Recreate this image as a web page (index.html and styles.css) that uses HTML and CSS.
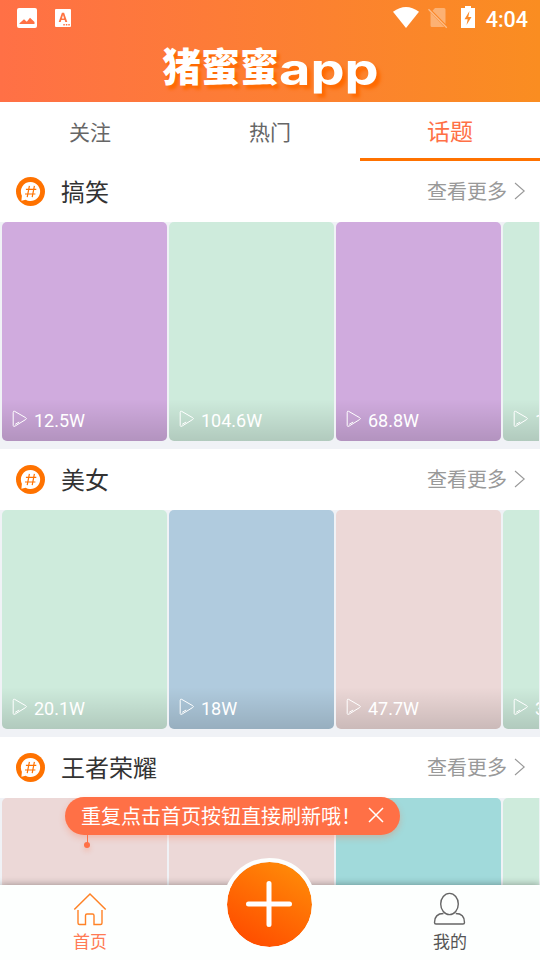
FILE: index.html
```html
<!DOCTYPE html>
<html lang="zh-CN">
<head>
<meta charset="utf-8">
<title>猪蜜蜜app</title>
<link rel="stylesheet" href="styles.css">
</head>
<body>
<svg class="defs" width="0" height="0">
  <symbol id="topic" viewBox="0 0 29 29"><circle cx="14.5" cy="14.5" r="14.5" fill="#ff7200"/><path d="M14.5 4.900a9.600 9.600 0 1 1-4.800 17.900L5.400 23.800 5.900 18.800A9.600 9.600 0 0 1 14.500 4.900z" fill="#fff"/><path d="M13.400 8.800 11.200 20.200M18.400 8.800 16.200 20.200M9.900 12.300h10.400M9 17h10.400" stroke="#ff7200" stroke-width="1.200" fill="none"/></symbol>
  <symbol id="play" viewBox="0 0 16 18"><path d="M1.200 2.300Q1.200 .8 2.600 1.300L13.700 7.700Q15.200 8.600 13.700 9.500L3.200 16Q1.200 17 1.200 15.500zM3.200 14.300l4-2.300" fill="none" stroke="#fff" stroke-width="1"/></symbol>
  <symbol id="more" viewBox="0 0 12 18"><path d="M1 1 10.200 9 1 17" fill="none" stroke="#999" stroke-width="1.100"/></symbol>
</svg>
<header class="top">
  <div class="status">
    <svg class="s-image" viewBox="0 0 20 20"><path fill="#fff" fill-rule="evenodd" d="M2 0h16a2 2 0 0 1 2 2v16a2 2 0 0 1-2 2H2a2 2 0 0 1-2-2V2a2 2 0 0 1 2-2zM2.500 16h15V14l-4.500-4.300-3.200 4-2.800-2.500-4.500 4z"/></svg>
    <svg class="s-lang" viewBox="0 0 16 18"><path fill="#fff" fill-rule="evenodd" d="M1 0h14a1 1 0 0 1 1 1v16a1 1 0 0 1-1 1H1a1 1 0 0 1-1-1V1a1 1 0 0 1 1-1zM6.900 3.800 3.700 13h2l.6-1.900h3.400l.6 1.900h2L9.100 3.800zM6.900 9.400h2.200L8 6zM8.300 15v1.500h1.500V15zM10.800 15v1.500h1.500V15zM13.300 15v1.500h1.500V15z"/></svg>
    <svg class="s-wifi" viewBox="0 0 26 21"><path fill="#fff" d="M0 4.800Q13-4.800 26 4.800L13 21z"/></svg>
    <svg class="s-sim" viewBox="0 0 20 21"><path fill="#fff" fill-opacity=".35" d="M7 0h9q1.500 0 1.500 1.500V16L4.500 2.700zM2.500 4.500 16.300 19H4q-1.500 0-1.500-1.500z"/><path d="M.500 1.200 18.800 19.800" stroke="#fff" stroke-opacity=".45" stroke-width="1.300"/></svg>
    <svg class="s-battery" viewBox="0 0 14 22"><path fill="#fff" fill-rule="evenodd" d="M4 0h6v2h4v20H0V2h4zM8.500 5 3.500 13.200h3.200L5.500 19l5-8H7.300z"/></svg>
    <span class="clock">4:04</span>
  </div>
  <h1 class="logo"><span class="logo-cn">猪蜜蜜</span><span class="logo-en">app</span></h1>
</header>
<nav class="tabs">
  <a class="tab">关注</a><a class="tab">热门</a><a class="tab active">话题</a>
</nav>
<main class="feed">
  <section class="topic">
    <div class="topic-head"><svg class="badge"><use href="#topic"/></svg><h2>搞笑</h2><span class="more">查看更多</span><svg class="chev"><use href="#more"/></svg></div>
    <div class="cards">
      <div class="card purple"><div class="plays"><svg><use href="#play"/></svg>12.5W</div></div>
      <div class="card green"><div class="plays"><svg><use href="#play"/></svg>104.6W</div></div>
      <div class="card purple"><div class="plays"><svg><use href="#play"/></svg>68.8W</div></div>
      <div class="card green"><div class="plays"><svg><use href="#play"/></svg>1</div></div>
    </div>
  </section>
  <section class="topic">
    <div class="topic-head"><svg class="badge"><use href="#topic"/></svg><h2>美女</h2><span class="more">查看更多</span><svg class="chev"><use href="#more"/></svg></div>
    <div class="cards">
      <div class="card green"><div class="plays"><svg><use href="#play"/></svg>20.1W</div></div>
      <div class="card blue"><div class="plays"><svg><use href="#play"/></svg>18W</div></div>
      <div class="card pink"><div class="plays"><svg><use href="#play"/></svg>47.7W</div></div>
      <div class="card green"><div class="plays"><svg><use href="#play"/></svg>3</div></div>
    </div>
  </section>
  <section class="topic">
    <div class="topic-head"><svg class="badge"><use href="#topic"/></svg><h2>王者荣耀</h2><span class="more">查看更多</span><svg class="chev"><use href="#more"/></svg></div>
    <div class="cards">
      <div class="card pink"></div><div class="card pink"></div><div class="card teal"></div><div class="card green"></div>
    </div>
  </section>
</main>
<div class="tip"><span>重复点击首页按钮直接刷新哦！</span><svg class="close" viewBox="0 0 16 16"><path d="M1 1 15 15M15 1 1 15" stroke="#fff" stroke-width="1.500"/></svg></div>
<footer class="bar">
  <a class="item home"><svg viewBox="0 0 34 34"><path d="M1.300 17.500 17 2 32.700 17.500" fill="none" stroke="#ff8226" stroke-width="1.500"/><path d="M5 18v13q0 1.500 1.500 1.500H12.500V23.500q0-1.500 1.500-1.500h5.500q1.500 0 1.500 1.500v9h6.500q1.500 0 1.500-1.500V18" fill="none" stroke="#ff8226" stroke-width="1.400"/></svg>首页</a>
  <a class="item mine"><svg viewBox="0 0 34 34"><ellipse cx="16.500" cy="12" rx="8.800" ry="10.600" fill="none" stroke="#666" stroke-width="1.400"/><path d="M10.500 21.500C4.500 21.500 1.500 25 1.500 30.500q0 1.500 1.500 1.500h27q1.500 0 1.500-1.500c0-5.500-3-9-8.800-9" fill="none" stroke="#666" stroke-width="1.400"/></svg>我的</a>
</footer>
<div class="add"><svg viewBox="0 0 46 46"><path d="M23 2.500v41M2.500 23h41" stroke="#fff" stroke-width="5" stroke-linecap="round"/></svg></div>
</body>
</html>
```
FILE: styles.css
```css
* { box-sizing: border-box; }
body {
  margin: 0;
  width: 540px;
  height: 960px;
  overflow: hidden;
  position: relative;
  display: flex;
  flex-direction: column;
  background: #f0f2f6;
  font-family: Roboto, "Noto Sans CJK SC", sans-serif;
}
svg { display: block; flex: none; }
.defs { position: absolute; }
h1, h2 { margin: 0; font-weight: 400; }

.top { flex: none; height: 102px; background: linear-gradient(90deg, #ff7046, #fa8d21); }
.status { height: 36px; display: flex; align-items: flex-start; padding: 8px 12px 0 17px; }
.s-image { width: 20px; height: 20px; }
.s-lang { width: 16px; height: 18px; margin: 1px auto 0 18px; }
.s-wifi { width: 26px; height: 21px; margin-top: -1px; }
.s-sim { width: 20px; height: 21px; margin-left: 9px; }
.s-battery { width: 14px; height: 22px; margin: -2px 11px 0 13px; }
.clock { color: #fff; font-size: 21.500px; font-weight: 500; line-height: 24px; }
.logo {
  height: 66px;
  padding-left: 162px;
  display: flex;
  color: #fff;
  white-space: nowrap;
  text-shadow: 3px 4px 3px #ff6a00;
}
.logo-cn { font: 900 39px/56px "Noto Sans CJK SC", sans-serif; width: 117px; }
.logo-en { font: 700 43px/66px Inter, sans-serif; transform: scaleX(1.26); transform-origin: 0 0; }

.tabs { flex: none; height: 59px; display: flex; background: #fff; }
.tab { flex: 1; height: 59px; text-align: center; font-size: 21px; line-height: 63px; color: #666; }
.tab.active { font-size: 23px; line-height: 61px; color: #ff7046; border-bottom: 3px solid #ff7200; }

.feed { flex: 1; min-height: 0; overflow: hidden; display: flex; flex-direction: column; gap: 8px; }
.topic { flex: none; }
.topic-head { height: 61px; display: flex; align-items: center; padding: 0 15px 0 16px; background: #fff; }
.badge { width: 29px; height: 29px; }
.topic-head h2 { margin-left: 16px; padding-top: 3px; flex: 1; font-size: 24px; line-height: 58px; color: #333; }
.more { font-size: 20px; line-height: 60px; color: #999; }
.chev { width: 12px; height: 18px; margin: -2px -1px 0 7px; }
.cards { display: grid; grid-template-columns: 165px 165px 165px 36px; gap: 2px; padding-left: 2px; height: 219px; }
.card { border-radius: 5px; overflow: hidden; display: flex; flex-direction: column; justify-content: flex-end; }
.card:last-child { border-radius: 5px 0 0 5px; }
.purple { background: #d0abde; }
.green { background: #ceebdc; }
.blue { background: #b0cbde; }
.pink { background: #ecd8d7; }
.teal { background: #a1dadb; }
.plays {
  height: 42px;
  padding: 1px 0 0 10px;
  display: flex;
  align-items: center;
  gap: 6px;
  color: #fff;
  font-size: 18px;
  background: linear-gradient(rgba(0,0,0,0), rgba(0,0,0,.14));
}
.plays svg { width: 16px; height: 18px; margin-top: -3px; }

.tip {
  position: absolute;
  left: 65px;
  top: 797px;
  width: 335px;
  height: 38px;
  border-radius: 19px;
  padding-left: 16px;
  display: flex;
  align-items: center;
  background: #ff7046;
  color: #fff;
  font-size: 20px;
  line-height: 38px;
  box-shadow: 0 3px 6px rgba(255,112,70,.3);
  white-space: nowrap;
}
.tip span { width: 287px; padding-top: 2px; }
.close { width: 16px; height: 16px; margin-top: -2px; }
.tip::before { content: ""; position: absolute; left: 22px; top: 38px; width: 1px; height: 9px; background: #ff7046; }
.tip::after { content: ""; position: absolute; left: 19px; top: 45px; width: 6px; height: 6px; border-radius: 50%; background: #ff7046; box-shadow: 0 3px 5px rgba(255,112,70,.3); }

.bar {
  position: absolute;
  left: 0;
  bottom: 0;
  width: 540px;
  height: 75px;
  display: flex;
  justify-content: space-between;
  background: #fdfffe;
  box-shadow: 0 -1px 7px rgba(0,0,0,.3);
}
.item { width: 180px; padding-top: 7px; display: flex; flex-direction: column; align-items: center; font-size: 17px; line-height: 33px; }
.item svg { width: 34px; height: 34px; }
.home { color: #ff7b55; }
.mine { color: #555; }
.add {
  position: absolute;
  left: 223px;
  top: 858px;
  width: 93px;
  height: 93px;
  border: 4px solid #fdfffe;
  border-radius: 50%;
  background: linear-gradient(30deg, #ff5000 15%, #ff8a08 90%) padding-box;
  display: flex;
  align-items: center;
  justify-content: center;
}
.add svg { width: 46px; height: 46px; margin: -2px 1px 0 0; }
```
